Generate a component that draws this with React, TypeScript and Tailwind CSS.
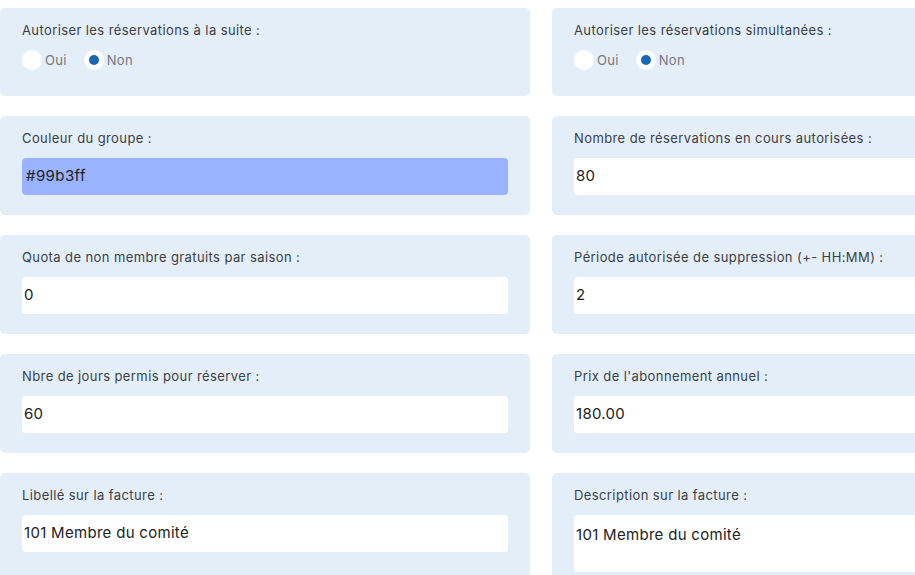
import React from "react";

type Field = {
  label: string;
  value?: string;
  kind: "radio" | "input" | "color" | "textarea";
  checked?: "oui" | "non";
};

const fields: Field[] = [
  { label: "Autoriser les réservations à la suite :", kind: "radio", checked: "non" },
  { label: "Autoriser les réservations simultanées :", kind: "radio", checked: "non" },
  { label: "Couleur du groupe :", kind: "color", value: "#99b3ff" },
  { label: "Nombre de réservations en cours autorisées :", kind: "input", value: "80" },
  { label: "Quota de non membre gratuits par saison :", kind: "input", value: "0" },
  { label: "Période autorisée de suppression (+- HH:MM) :", kind: "input", value: "2" },
  { label: "Nbre de jours permis pour réserver :", kind: "input", value: "60" },
  { label: "Prix de l'abonnement annuel :", kind: "input", value: "180.00" },
  { label: "Libellé sur la facture :", kind: "input", value: "101 Membre du comité" },
  { label: "Description sur la facture :", kind: "textarea", value: "101 Membre du comité" },
];

const Radio = ({ label, checked }: { label: string; checked: boolean }) => (
  <label className="flex items-center gap-[3px]">
    <span className="flex h-5 w-5 items-center justify-center rounded-full bg-white">
      {checked && <span className="h-[10px] w-[10px] rounded-full bg-[#1769b3]" />}
    </span>
    <span className="text-[13px] leading-5 tracking-[0.3px] text-[#74787d]">{label}</span>
  </label>
);

const FieldCard = ({ field }: { field: Field }) => {
  return (
    <div className="rounded-[5px] bg-[#e3eef8] px-[22px] pt-[14px] pb-5">
      <div className="mb-3 text-[13px] leading-4 tracking-[0.4px] text-[#3d3f42]">
        {field.label}
      </div>

      {field.kind === "radio" && (
        <div className="flex items-center gap-[17px] pb-[6px]">
          <Radio label="Oui" checked={field.checked === "oui"} />
          <Radio label="Non" checked={field.checked === "non"} />
        </div>
      )}

      {field.kind === "color" && (
        <div className="flex h-[37px] items-center rounded-[4px] bg-[#99b3ff] px-[4px] text-[15px] tracking-[0.4px] text-[#222]">
          {field.value}
        </div>
      )}

      {field.kind === "input" && (
        <div className="flex h-[37px] items-center rounded-[4px] bg-white px-[2px] text-[15px] tracking-[0.3px] text-[#222]">
          {field.value}
        </div>
      )}

      {field.kind === "textarea" && (
        <div className="h-[57px] rounded-[4px] bg-white px-[2px] pt-[10px] text-[15px] leading-5 tracking-[0.3px] text-[#222]">
          {field.value}
        </div>
      )}
    </div>
  );
};

export default function App() {
  return (
    <div
      className="min-h-screen overflow-hidden bg-white pt-2"
      style={{ fontFamily: "Inter, 'Noto Sans', sans-serif" }}
    >
      <div className="grid w-[1082px] grid-cols-[530px_530px] gap-x-[22px] gap-y-5">
        {fields.map((f) => (
          <FieldCard key={f.label} field={f} />
        ))}
      </div>
    </div>
  );
}
